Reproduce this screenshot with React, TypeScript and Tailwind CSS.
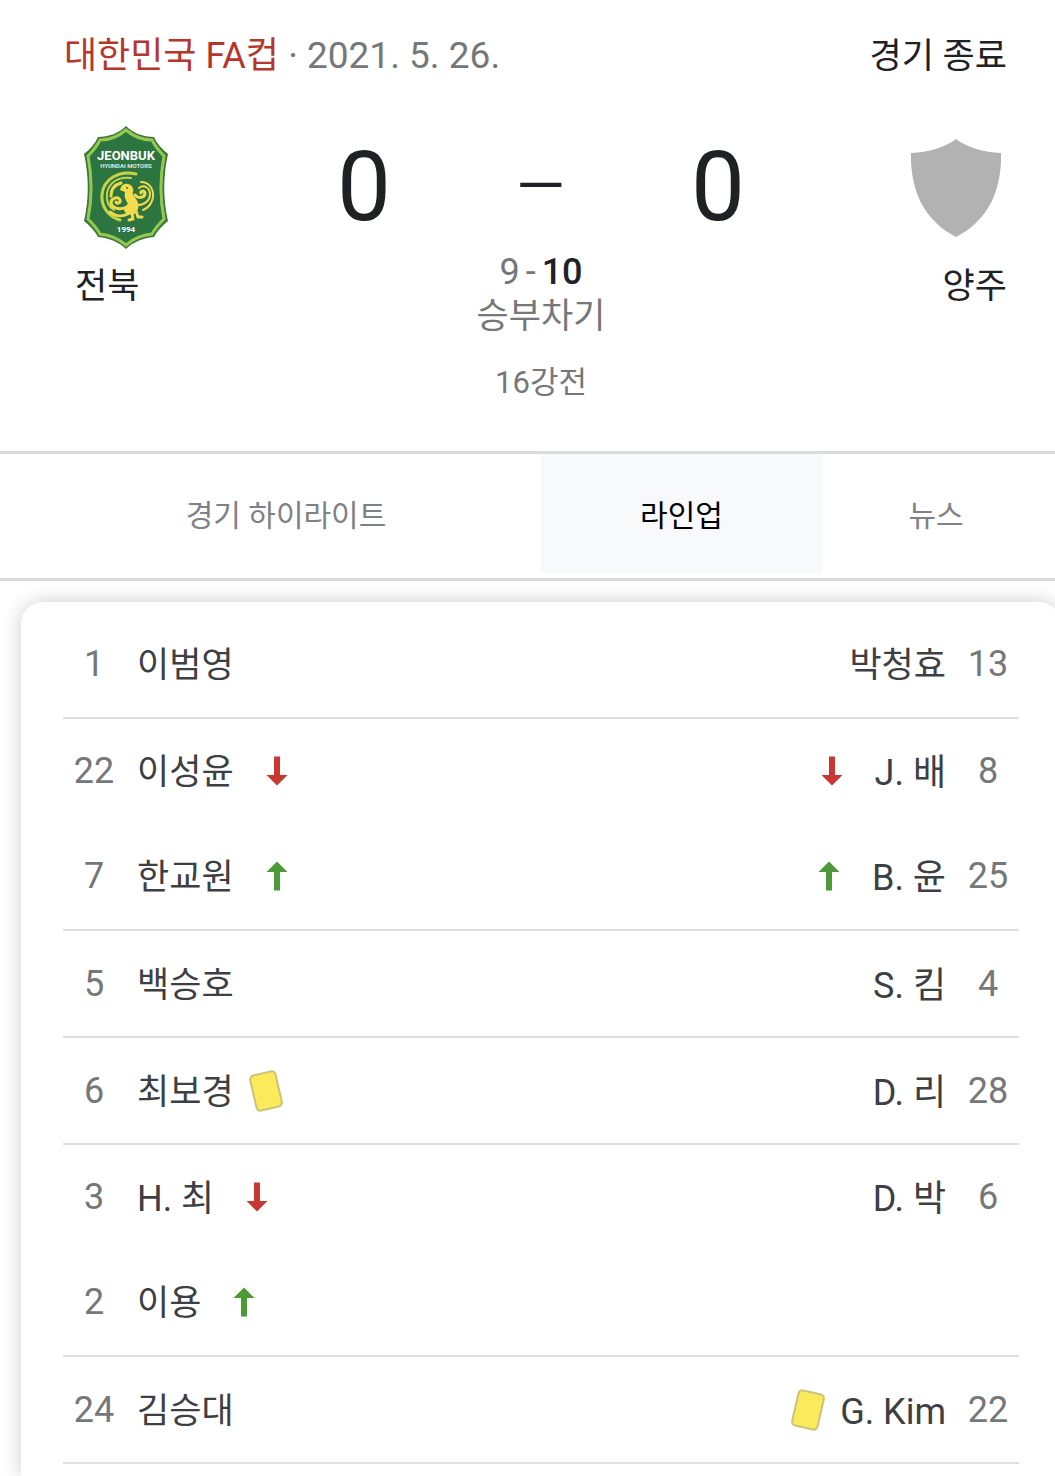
import clsx from "clsx"

type Mark = "in" | "out" | "yellow"

interface Player {
  number: number
  name: string
  mark?: Mark
}

interface Row {
  home?: Player
  away?: Player
}

// a group holds a starter and, if he was replaced, the substitute under him
const LINEUP: Row[][] = [
  [{ home: { number: 1, name: "이범영" }, away: { number: 13, name: "박청효" } }],
  [
    { home: { number: 22, name: "이성윤", mark: "out" }, away: { number: 8, name: "J. 배", mark: "out" } },
    { home: { number: 7, name: "한교원", mark: "in" }, away: { number: 25, name: "B. 윤", mark: "in" } },
  ],
  [{ home: { number: 5, name: "백승호" }, away: { number: 4, name: "S. 킴" } }],
  [{ home: { number: 6, name: "최보경", mark: "yellow" }, away: { number: 28, name: "D. 리" } }],
  [
    { home: { number: 3, name: "H. 최", mark: "out" }, away: { number: 6, name: "D. 박" } },
    { home: { number: 2, name: "이용", mark: "in" } },
  ],
  [{ home: { number: 24, name: "김승대" }, away: { number: 22, name: "G. Kim", mark: "yellow" } }],
]

function JeonbukCrest() {
  return (
    <svg viewBox="0 0 86 126" className="h-[126px] w-[86px]" aria-hidden="true">
      <path
        d="M43 1C50 8 60 12 71 12C74 19 79 24 85 29C80 51 80 75 85 96C79 101 74 106 71 112C60 113 50 117 43 124C36 117 26 113 15 112C12 106 7 101 1 96C6 75 6 51 1 29C7 24 12 19 15 12C26 12 36 8 43 1Z"
        fill="#39783d"
      />
      <path
        d="M43 5C50 11 59 15 69 15C72 21 76 26 81 31C77 52 77 74 81 94C76 99 72 103 69 109C59 110 50 114 43 120C36 114 27 110 17 109C14 103 10 99 5 94C9 74 9 52 5 31C10 26 14 21 17 15C27 15 36 11 43 5Z"
        fill="#2c7541"
        stroke="#96c850"
        strokeWidth="3"
      />
      <g fill="#fff" textAnchor="middle" fontWeight="700" fontFamily="Roboto, sans-serif">
        <text x="43" y="35" fontSize="13">JEONBUK</text>
        <text x="43" y="43" fontSize="6" fillOpacity="0.85">HYUNDAI MOTORS</text>
        <text x="43" y="107" fontSize="8">1994</text>
      </g>
      {/* phoenix: wing swirls, right wing, body and claws */}
      <g fill="none" strokeLinecap="round" strokeLinejoin="round">
        <g stroke="#c5d24a">
          <path d="M53 49C36 45 20 54 19 70C18 82 26 92 37 95" strokeWidth="3" />
          <path d="M48 53C35 51 26 58 24 68C23 76 26 82 31 85" strokeWidth="2" />
        </g>
        <g stroke="#efd94c">
          <path d="M38 58C31 60 28 65 28 71" strokeWidth="3" />
          <path d="M46 80C40 86 29 84 28 78C28 73 35 71 37 75C38 78 34 79 33 77" strokeWidth="3" />
          <path d="M48 87C41 92 33 92 27 87" strokeWidth="3" />
          <path d="M52 70C55 74 62 73 62 68C61 65 57 66 58 68" strokeWidth="3" />
          <path d="M56 63C61 59 67 63 67 69C67 76 61 80 55 80" strokeWidth="2" />
          <path d="M58 57C66 57 71 64 70 72C69 78 65 83 60 85" strokeWidth="2" />
          <path d="M49 88L50 94M53 86L55 92L59 92M50 94L46 95" strokeWidth="3" />
        </g>
      </g>
      <path
        d="M37 65C38 60 41 58 45 59C49 60 51 63 50 67C49 69 51 71 53 74C57 79 56 86 51 89C46 91 41 88 41 84C44 84 46 81 44 77C42 74 41 71 42 67Z"
        fill="#f4dd4d"
      />
      <circle cx="44" cy="63" r="1" fill="#2c7541" />
    </svg>
  )
}

function EmptyCrest() {
  return (
    <svg viewBox="0 0 92 100" className="h-[100px] w-[92px]" aria-hidden="true">
      <path
        d="M46 1C58 10 73 14 91 15C92 54 77 83 46 99C15 83 0 54 1 15C19 14 34 10 46 1Z"
        fill="#b2b2b2"
      />
    </svg>
  )
}

function MarkIcon({ mark, flip }: { mark: Mark; flip: boolean }) {
  if (mark === "yellow") {
    return (
      <svg viewBox="0 0 36 44" className="h-11 w-9" role="img" aria-label="경고">
        <rect
          x="5"
          y="4"
          width="26"
          height="36"
          rx="4"
          transform={flip ? "rotate(13 18 22)" : "rotate(-13 18 22)"}
          fill="#fbea5c"
          stroke="#cdc376"
          strokeWidth="2"
        />
      </svg>
    )
  }

  return mark === "out" ? (
    <svg viewBox="0 0 22 30" className="mx-[18px] h-[30px] w-[22px]" role="img" aria-label="교체 아웃">
      <path d="M8 0.5H14V19H21.500L11 29.500L0.500 19H8Z" fill="#c93733" />
    </svg>
  ) : (
    <svg viewBox="0 0 22 30" className="mx-[18px] h-[30px] w-[22px]" role="img" aria-label="교체 투입">
      <path d="M8 29.500H14V11H21.500L11 0.500L0.500 11H8Z" fill="#4b9a35" />
    </svg>
  )
}

function PlayerCells({ player, away = false }: { player?: Player; away?: boolean }) {
  const number = (
    <td className="w-[62px] text-center text-[36px] text-[#757779]">{player?.number}</td>
  )
  const name = (
    <td className="pr-[11px] pl-3">
      {player && (
        <div className={clsx("flex items-center gap-[14px]", away && "flex-row-reverse")}>
          <span className={clsx("pt-1", /[A-Z]/.test(player.name) ? "text-[36px]" : "text-[35px]")}>
            {player.name}
          </span>
          {player.mark && <MarkIcon mark={player.mark} flip={away} />}
        </div>
      )}
    </td>
  )

  return away ? (
    <>
      {name}
      {number}
    </>
  ) : (
    <>
      {number}
      {name}
    </>
  )
}

export default function App() {
  return (
    <main className="overflow-hidden bg-white font-[Roboto,'Noto_Sans_CJK_KR',sans-serif] text-[#202124]">
      <header className="pt-[34px] pb-[45px]">
        <div className="flex justify-between pr-12 pl-16 text-[35px] leading-[44px]">
          <p className="text-[37px] text-[#757779]">
            <a href="#" className="text-[36px] text-[#b5372c]">
              대한민국 FA컵
            </a>{" "}
            · 2021. 5. 26.
          </p>
          <p className="pt-px">경기 종료</p>
        </div>

        <div className="mt-[46px] flex justify-between pr-12 pl-[75px]">
          <div className="w-[102px] text-[35px] leading-10">
            <div className="flex h-[126px] items-center justify-center">
              <JeonbukCrest />
            </div>
            <p className="mt-4">전북</p>
          </div>

          <div className="w-[531px] pt-[14px] text-center text-[#757779]">
            <div className="grid grid-cols-3 items-center text-[96px] leading-[96px] text-[#202124]">
              <span>0</span>
              <span className="text-[84px] font-light">–</span>
              <span>0</span>
            </div>
            <p className="mt-[15px] flex justify-center gap-[6px] text-[36px] leading-[44px]">
              <span>9</span>
              <span>-</span>
              <b className="font-medium text-[#202124]">10</b>
            </p>
            <p className="mt-px text-[35px] leading-[44px]">승부차기</p>
            <p className="mt-[22px] text-[31px] leading-[44px]">16강전</p>
          </div>

          <div className="w-[102px] text-right text-[35px] leading-10">
            <div className="flex h-[126px] items-center justify-center">
              <EmptyCrest />
            </div>
            <p className="mt-4">양주</p>
          </div>
        </div>
      </header>

      <nav className="mt-px flex h-[130px] border-y-[3px] border-[#dadbdc] pb-[5px] text-[30px] text-[#808184]">
        <button type="button" className="flex-1 pt-1 pl-[31px]">
          경기 하이라이트
        </button>
        <button type="button" aria-current="page" className="w-[281px] bg-[#f8f9fb] pt-1 text-black">
          라인업
        </button>
        <button type="button" className="w-[233px] pt-1 pr-[5px]">
          뉴스
        </button>
      </nav>

      <section className="overflow-hidden pt-[21px] pl-[21px]">
        <div className="-mr-[6px] rounded-t-[22px] bg-white px-[42px] pt-[9px] pb-3 shadow-[0_0_20px_rgba(0,0,0,0.2)]">
          <table className="w-full border-collapse leading-[44px] text-[#3c4043]" aria-label="라인업">
            {LINEUP.map((group, i) => (
              <tbody key={i} className="border-b-2 border-[#dedfe0]">
                {group.map((row, j) => (
                  <tr key={j} className="h-[105px] last:h-[107px]">
                    <PlayerCells player={row.home} />
                    <PlayerCells player={row.away} away />
                  </tr>
                ))}
              </tbody>
            ))}
          </table>
        </div>
      </section>
    </main>
  )
}
